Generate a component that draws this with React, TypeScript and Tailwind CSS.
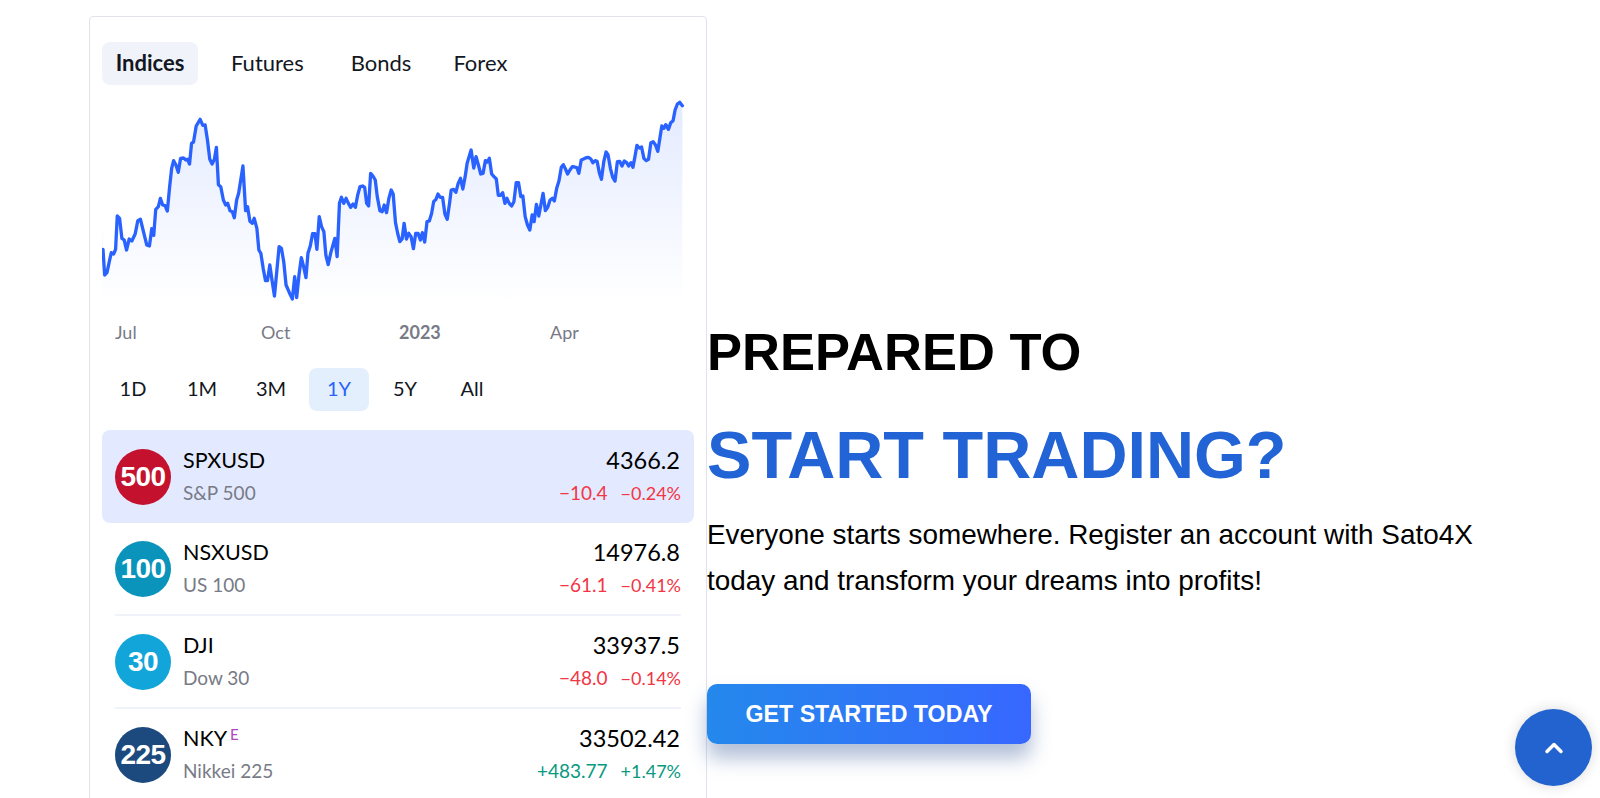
import { ChevronUp } from 'lucide-react'

const leftPts =
  '3,478 8,555 15,548 22,515 28,488 35,492 41,478 46,378 53,385 60,445 67,450 74,480 82,447 90,453 100,432 108,392 116,388 125,425 135,465 143,468 150,416 156,436 162,358 170,350 176,325 183,345 190,347 197,363 204,290 210,235 216,212 223,225 230,247 237,205 246,204 253,210 258,208 264,222 270,160 276,156 284,108 296,88 304,106 311,105 318,150 325,208 332,222 339,208 345,172 351,284 358,290 366,330 373,345 379,340 386,362 393,365 399,383 406,330 412,310 425,228 433,362 439,350 446,394 453,400 459,385 467,415 473,480 479,490 486,535 493,572 499,572 506,525 514,580 520,618 534,470 541,475 548,515 555,585 565,608 574,627 581,560 587,623 594,555 601,503 608,530 615,563 621,490 628,468 635,431 642,431 648,478 655,380 662,410 669,425 675,495 682,524 690,488 702,445 709,500 716,340 722,322 729,340 736,325 743,340 750,352 757,342 764,352 771,315 778,290 786,288 792,292 798,340 804,348 810,250 817,258 824,270 830,320 838,362 845,365 851,345 858,368 865,325 872,300 878,312 885,398 892,432 898,455'

// second half of the line, x measured from 870
const rightPts =
  '35,447 41,400 48,447 55,430 62,440 69,476 76,430 83,430 90,450 96,428 103,456 110,395 117,393 124,370 130,335 137,328 143,312 150,322 157,322 164,372 171,388 178,340 183,300 190,298 197,307 204,280 211,265 218,297 225,260 231,220 243,180 251,234 258,200 265,225 272,252 279,250 286,212 292,216 298,205 305,252 312,260 319,267 325,316 332,316 338,308 345,340 351,325 358,340 365,348 372,335 379,278 386,278 393,320 399,318 406,380 413,405 420,420 427,375 433,395 440,343 447,378 460,310 467,362 474,352 481,330 488,325 494,333 501,295 508,272 515,232 521,224 528,238 534,252 541,240 548,230 555,231 562,233 568,250 575,210 582,207 590,203 597,202 604,207 610,218 617,212 623,214 630,250 636,268 643,215 650,186 656,195 663,235 670,262 677,273 684,215 691,214 698,228 705,213 712,218 718,228 725,218 731,232 737,200 743,166 750,174 757,171 764,205 771,212 778,208 785,158 792,155 799,165 806,184 818,108 824,115 830,104 838,118 845,98 852,92 858,60 865,42 872,37 880,47'

const shifted = rightPts
  .split(' ')
  .map((p) => {
    const [x, y] = p.split(',').map(Number)
    return `${x + 870},${y}`
  })
  .join(' ')

const line = `${leftPts} ${shifted}`

const Chart = () => (
  <svg viewBox="0 0 1770 660" preserveAspectRatio="none" className="block h-[220px] w-[587px]">
    <defs>
      <linearGradient id="area" x1="0" y1="0" x2="0" y2="1">
        <stop offset="0" stopColor="#2962ff" stopOpacity="0.13" />
        <stop offset="1" stopColor="#2962ff" stopOpacity="0" />
      </linearGradient>
    </defs>
    <polygon points={`0,640 0,400 ${line} 1750,640`} fill="url(#area)" />
    <polyline
      points={line}
      fill="none"
      stroke="#2962ff"
      strokeWidth="10"
      strokeLinejoin="round"
      strokeLinecap="round"
    />
  </svg>
)

type Row = {
  logo: string
  logoBg: string
  symbol: string
  name: string
  price: string
  change: string
  percent: string
  up?: boolean
  mark?: boolean
}

const rows: Row[] = [
  { logo: '500', logoBg: 'bg-[#c4122e]', symbol: 'SPXUSD', name: 'S&P 500', price: '4366.2', change: '−10.4', percent: '−0.24%' },
  { logo: '100', logoBg: 'bg-[#0a94bb]', symbol: 'NSXUSD', name: 'US 100', price: '14976.8', change: '−61.1', percent: '−0.41%' },
  { logo: '30', logoBg: 'bg-[#12a5da]', symbol: 'DJI', name: 'Dow 30', price: '33937.5', change: '−48.0', percent: '−0.14%' },
  { logo: '225', logoBg: 'bg-[#1c4a7e]', symbol: 'NKY', name: 'Nikkei 225', price: '33502.42', change: '+483.77', percent: '+1.47%', up: true, mark: true },
]

const ranges = [
  { label: '1D', cls: 'ml-[1px] mr-[9px]' },
  { label: '1M', cls: 'mr-[9px]' },
  { label: '3M', cls: 'mr-[8px]' },
  { label: '1Y', cls: 'mr-[6px] bg-[#e3effd] text-[#2962ff]' },
  { label: '5Y', cls: 'mr-[7px]' },
  { label: 'All', cls: '' },
]

const QuoteRow = ({ row, active }: { row: Row; active: boolean }) => (
  <div className={active ? 'rounded-lg bg-[#e3eaff]' : ''}>
    <div className={`flex items-center px-[13px] ${active ? 'h-[93px]' : 'h-[91px]'}`}>
      <div
        className={`flex h-14 w-14 shrink-0 items-center justify-center rounded-full font-['Liberation_Sans',sans-serif] text-[28px] font-bold tracking-[-0.5px] text-white ${row.logoBg}`}
      >
        {row.logo}
      </div>
      <div className="ml-[12px] flex-1">
        <div className="text-[21.5px] leading-[30px] text-black">
          {row.symbol}
          {row.mark && (
            <sup className="relative -top-[6px] ml-[3px] align-baseline text-[15px] text-[#ab47bc]">E</sup>
          )}
        </div>
        <div className="mt-[3px] text-[19px] leading-[30px] text-[#787b86]">{row.name}</div>
      </div>
      <div className="text-right">
        <div className="pr-[1px] text-[23.5px] leading-[30px] text-black">{row.price}</div>
        <div className={`mt-[3px] flex items-baseline justify-end gap-[13px] text-[18px] leading-[30px] ${row.up ? 'text-[#089981]' : 'text-[#f23645]'}`}>
          <span className="text-[19px]">{row.change}</span>
          <span>{row.percent}</span>
        </div>
      </div>
    </div>
  </div>
)

const Widget = () => (
  <div className="ml-[89px] mt-4 h-[900px] w-[618px] shrink-0 rounded-[4px] border border-[#e0e3eb] bg-white px-[12px] pt-[25px] font-['Lato',sans-serif]">
    <div className="flex text-[22px] text-[#131722]">
      <div className="flex h-[43px] w-[96px] items-center justify-center rounded-lg bg-[#f0f3fa] pb-[2px] font-bold">Indices</div>
      <div className="ml-[33px] flex h-[43px] items-center pb-[2px]">Futures</div>
      <div className="ml-[47px] flex h-[43px] items-center pb-[2px]">Bonds</div>
      <div className="ml-[42px] flex h-[43px] items-center pb-[2px]">Forex</div>
    </div>
    <div className="mt-[5px]">
      <Chart />
    </div>
    <div className="relative mt-[10px] h-[24px] text-[18px] leading-[24px] text-[#787b86]">
      <span className="absolute left-[13px]">Jul</span>
      <span className="absolute left-[159px]">Oct</span>
      <span className="absolute left-[297px] font-bold">2023</span>
      <span className="absolute left-[448px]">Apr</span>
    </div>
    <div className="mt-[24px] flex text-[20px] text-[#131722]">
      {ranges.map((r) => (
        <div key={r.label} className={`flex h-[43px] w-[60px] items-center justify-center rounded-lg pb-[3px] ${r.cls}`}>
          {r.label}
        </div>
      ))}
    </div>
    <div className="mt-[19px] w-[592px]">
      {rows.map((row, i) => (
        <div key={row.symbol}>
          <QuoteRow row={row} active={i === 0} />
          {i > 0 && <div className="mx-[13px] h-[2px] bg-[#f0f3fa]" />}
        </div>
      ))}
    </div>
  </div>
)

const App = () => {
  return (
    <div className="relative flex h-[798px] overflow-hidden bg-white font-['Liberation_Sans',sans-serif]">
      <Widget />
      <div className="pt-[317px]">
        <h2 className="text-[52.5px] font-bold leading-[70px] text-black">PREPARED TO</h2>
        <h2 className="mt-[26px] text-[66.6px] font-bold leading-[84px] text-[#2263d5]">START TRADING?</h2>
        <p className="mt-[15px] w-[800px] text-[27.9px] leading-[46px] text-black">
          Everyone starts somewhere. Register an account with Sato4X
          <br />
          today and transform your dreams into profits!
        </p>
        <button className="mt-[80px] h-[60px] w-[324px] rounded-[10px] bg-gradient-to-r from-[#2488ec] to-[#3767ff] text-[23.2px] font-bold text-white shadow-[0_14px_20px_rgba(30,70,140,0.35)]">
          GET STARTED TODAY
        </button>
      </div>
      <div className="absolute left-[1515px] top-[709px] flex h-[77px] w-[77px] items-center justify-center rounded-full bg-[#2263cf] text-white shadow-[0_0_14px_rgba(0,0,0,0.15)]">
        <ChevronUp size={28} strokeWidth={3} />
      </div>
    </div>
  )
}

export default App
